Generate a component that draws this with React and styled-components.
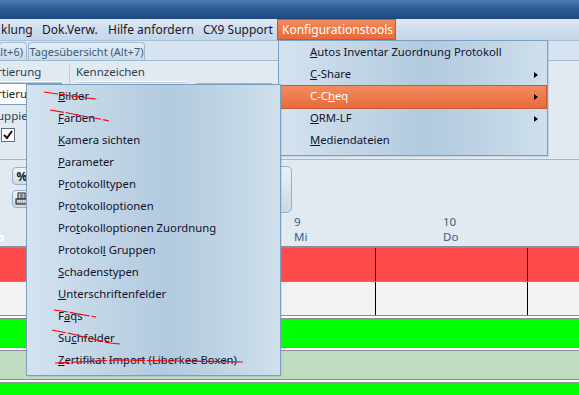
import React from "react";
import styled, { createGlobalStyle } from "styled-components";

const GlobalStyle = createGlobalStyle`
  html, body {
    margin: 0;
    padding: 0;
    background: #e1e9f1;
  }
  body {
    font-family: "Noto Sans", "Open Sans", sans-serif;
    font-size: 12px;
  }
`;

const Page = styled.div`
  position: relative;
  width: 579px;
  height: 395px;
  overflow: hidden;
  background: #e1e9f1;
`;

const TitleBar = styled.div`
  height: 19px;
  background: linear-gradient(to bottom, #4a7cb2 0%, #2c5c93 45%, #1c4981 100%);
`;

const MenuBar = styled.div`
  height: 21px;
  display: flex;
  align-items: stretch;
  background: linear-gradient(to bottom, #dde8f3 0%, #cddcec 60%, #c4d6e8 100%);
  border-bottom: 1px solid #a9c2da;
`;

const MenuItem = styled.div`
  box-sizing: border-box;
  width: ${(p) => p.$w}px;
  flex-shrink: 0;
  display: flex;
  align-items: center;
  padding-left: ${(p) => p.$pad}px;
  padding-bottom: 1px;
  color: ${(p) => (p.$active ? "#fff" : "#1b1530")};
  background: ${(p) =>
    p.$active ? "linear-gradient(to bottom, #f38a5c, #e9683a)" : "transparent"};
  border: 1px solid ${(p) => (p.$active ? "#c9582e" : "transparent")};
  font-size: 12px;
  white-space: nowrap;
  overflow: hidden;
`;

const TabStrip = styled.div`
  height: 19px;
  display: flex;
  align-items: flex-end;
  gap: 1px;
  background: #d7e3ee;
  border-bottom: 1px solid #9fbbd4;
`;

const Tab = styled.div`
  box-sizing: border-box;
  width: ${(p) => p.$w}px;
  flex-shrink: 0;
  height: 18px;
  display: flex;
  align-items: center;
  justify-content: ${(p) => (p.$cut ? "flex-end" : "center")};
  padding-right: ${(p) => (p.$cut ? "3px" : "0")};
  border: 1px solid #9fbbd4;
  border-bottom: none;
  border-radius: 4px 4px 0 0;
  background: linear-gradient(to bottom, #e4eef6, #c9dbea);
  color: #3e5a78;
  font-size: 11px;
  white-space: nowrap;
  overflow: hidden;
`;

const FilterPanel = styled.div`
  height: 98px;
  background: #e1e9f1;
  border-bottom: 1px solid #9cb6ce;
  display: grid;
  grid-template-columns: 62px 14px 110px 1fr;
  grid-template-rows: 22px 22px 20px 20px;
  align-items: center;
`;

const ColHead = styled.div`
  height: 18px;
  align-self: start;
  margin-top: 2px;
  border-bottom: 1px solid #ffffff;
  box-shadow: 0 1px 0 #b9cbdc;
  color: #2c3e55;
  font-size: 11.5px;
  line-height: 18px;
  white-space: nowrap;
  overflow: hidden;
  text-indent: ${(p) => p.$indent || 0}px;
`;

const ColSep = styled.div`
  justify-self: center;
  align-self: stretch;
  width: 1px;
  background: #b9cbdc;
  margin: 4px 0 -2px;
`;

const TextInput = styled.div`
  height: 20px;
  margin-left: -1px;
  border: 1px solid #7f9db9;
  background: #fff;
  color: #222;
  line-height: 20px;
  text-indent: -3px;
  white-space: nowrap;
  overflow: hidden;
  font-size: 11.5px;
`;

const PanelButton = styled.div`
  grid-column: 4;
  grid-row: 2 / 4;
  width: 80px;
  height: 36px;
  margin-left: 7px;
  align-self: start;
  border: 1px solid #9ab4cc;
  border-radius: 5px;
  background: linear-gradient(to bottom, #eef4f9, #d3e1ed);
`;

const Label = styled.div`
  grid-column: 1 / 3;
  color: #2c3e55;
  white-space: nowrap;
  margin-left: -3px;
  font-size: 11.5px;
`;

const Check = styled.div`
  width: 12px;
  height: 12px;
  margin-left: 1px;
  border: 1px solid #5d6e80;
  background: #fff;
  display: flex;
  align-items: center;
  justify-content: center;
`;

const Toolbar = styled.div`
  height: 55px;
  display: flex;
  align-items: flex-start;
  padding-left: 12px;
  background: #e1e9f1;
`;

const ToolColumn = styled.div`
  display: flex;
  flex-direction: column;
  gap: 5px;
  margin-top: 7px;
`;

const ToolButton = styled.div`
  width: 14px;
  height: 16px;
  padding-left: 2px;
  border: 1px solid #93b1cc;
  border-radius: 4px;
  background: linear-gradient(to bottom, #f1f6fa, #cddbe8);
  display: flex;
  align-items: center;
  justify-content: center;
  font-size: 12px;
  font-weight: bold;
  color: #111;
`;

const BigButton = styled.div`
  margin-left: 216px;
  margin-top: 6px;
  width: 44px;
  height: 45px;
  border: 1px solid #93b1cc;
  border-radius: 5px;
  background: linear-gradient(to bottom, #e9f1f7, #c8d9e7);
`;

const DateHeader = styled.div`
  height: 31px;
  display: flex;
  background: #e1e9f1;
  border-bottom: 2px solid #8a8f95;
`;

const DayCell = styled.div`
  box-sizing: border-box;
  width: ${(p) => p.$w}px;
  flex-shrink: 0;
  padding-left: ${(p) => p.$pad}px;
  margin-top: -1px;
  color: #355d8a;
  font-size: 11.5px;
  line-height: 15px;
`;

const LeftMark = styled.div`
  box-sizing: border-box;
  width: 8px;
  flex-shrink: 0;
  color: #ffffff;
  font-weight: bold;
  font-size: 10px;
  padding-top: 15px;
  text-indent: -2px;
`;

const Grid = styled.div`
  display: flex;
  flex-direction: column;
`;

const Row = styled.div`
  height: ${(p) => p.$h}px;
  background: ${(p) => p.$bg};
  border-bottom: 1px solid #8a8f95;
  position: relative;
  flex-shrink: 0;
`;

const RowGap = styled.div`
  height: 2px;
  background: #fff;
  border-bottom: 1px solid #8a8f95;
  flex-shrink: 0;
`;

const VLine = styled.div`
  position: absolute;
  top: 0;
  bottom: 0;
  left: ${(p) => p.$x}px;
  width: 1px;
  background: #000;
`;

const Menu = styled.div`
  position: absolute;
  left: ${(p) => p.$left}px;
  top: ${(p) => p.$top}px;
  width: ${(p) => p.$width}px;
  padding: 1px 0 3px;
  border: 1px solid #7a9fc0;
  background: linear-gradient(
    to right,
    #d5e3ef 0%,
    #c3d7e7 25%,
    #b2cadf 55%,
    #c0d5e5 80%,
    #cfe0ec 100%
  );
  box-shadow: 1px 1px 0 rgba(120, 150, 180, 0.25);
`;

const Item = styled.div`
  position: relative;
  box-sizing: border-box;
  height: 22px;
  margin: 0 1px;
  padding-left: ${(p) => p.$indent}px;
  padding-bottom: 3px;
  display: flex;
  align-items: center;
  font-size: 11.3px;
  color: ${(p) => (p.$active ? "#ffffff" : "#14122a")};
  background: ${(p) =>
    p.$active ? "linear-gradient(to bottom, #f38b5e, #e96a3c)" : "transparent"};
  outline: ${(p) => (p.$active ? "1px solid #c65a32" : "none")};
  white-space: pre;
`;

const Arrow = styled.span`
  position: absolute;
  right: 8px;
  top: 8px;
  width: 0;
  height: 0;
  border-top: 3px solid transparent;
  border-bottom: 3px solid transparent;
  border-left: 4px solid #000;
`;

const Strike = styled.svg`
  position: absolute;
  left: 0;
  top: 0;
  overflow: visible;
  pointer-events: none;
`;

const U = ({ text, at }) => (
  <span>
    {text.slice(0, at)}
    <u>{text[at]}</u>
    {text.slice(at + 1)}
  </span>
);

const topMenu = [
  { text: "Autos Inventar Zuordnung Protokoll", at: 0 },
  { text: "C-Share", at: 0, sub: true },
  { text: "C-Cheq", at: 3, sub: true, active: true },
  { text: "ORM-LF", at: 0, sub: true },
  { text: "Mediendateien", at: 0 },
];

// strike: hand drawn red line, points relative to the item box
const cheqMenu = [
  { text: "Bilder", at: 0, strike: "16,6 30,8 44,10 58,12 70,13" },
  { text: "Farben", at: 0, strike: "22,2 40,5 60,9 72,11 81,13" },
  { text: "Kamera sichten", at: 0 },
  { text: "Parameter", at: 0 },
  { text: "Protokolltypen", at: 1 },
  { text: "Protokolloptionen", at: 2 },
  { text: "Protokolloptionen Zuordnung", at: 3 },
  { text: "Protokoll Gruppen", at: 8 },
  { text: "Schadenstypen", at: 0 },
  { text: "Unterschriftenfelder", at: 0 },
  { text: "Faqs", at: 1, strike: "26,4 40,6 56,9 68,11" },
  { text: "Suchfelder", at: 2, strike: "24,2 44,6 64,11 82,15 92,16" },
  { text: "Zertifikat Import (Liberkee Boxen)", at: 0, strike: "27,13 90,10 150,11 215,12" },
];

export default function App() {
  return (
    <Page>
      <GlobalStyle />
      <TitleBar />
      <MenuBar>
        <MenuItem $w={36} $pad={0}>klung</MenuItem>
        <MenuItem $w={66} $pad={5}>Dok.Verw.</MenuItem>
        <MenuItem $w={95} $pad={5}>Hilfe anfordern</MenuItem>
        <MenuItem $w={80} $pad={5}>CX9 Support</MenuItem>
        <MenuItem $w={119} $pad={4} $active>
          Konfigurationstools
        </MenuItem>
      </MenuBar>
      <TabStrip>
        <Tab $w={28} $cut style={{ marginLeft: -1 }}>
          (Alt+6)
        </Tab>
        <Tab $w={117}>Tagesübersicht (Alt+7)</Tab>
      </TabStrip>
      <FilterPanel>
        <ColHead $indent={-3}>rtierung</ColHead>
        <ColSep />
        <ColHead>Kennzeichen</ColHead>
        <div />
        <TextInput>rtierung</TextInput>
        <div />
        <div />
        <PanelButton />
        <Label>uppierung</Label>
        <div style={{ gridColumn: 1 }}>
          <Check>
            <svg width="10" height="10" viewBox="0 0 10 10">
              <path d="M1 5 L4 8 L9 1" stroke="#111" strokeWidth="2" fill="none" />
            </svg>
          </Check>
        </div>
      </FilterPanel>
      <Toolbar>
        <ToolColumn>
          <ToolButton>%</ToolButton>
          <ToolButton>
            <svg width="14" height="14" viewBox="0 0 14 14">
              <rect x="3" y="1" width="7" height="6" fill="#fff" stroke="#111" />
              <path d="M4.5 3 H8.5 M4.5 5 H8.5" stroke="#111" />
              <rect x="1" y="7" width="12" height="5" fill="#bbb" stroke="#111" />
              <path d="M2 9 H12" stroke="#fff" strokeDasharray="1 1" />
            </svg>
          </ToolButton>
        </ToolColumn>
        <BigButton />
      </Toolbar>
      <DateHeader>
        <LeftMark>o</LeftMark>
        <DayCell $w={435} $pad={286}>
          9
          <br />
          Mi
        </DayCell>
        <DayCell $w={136} $pad={0}>
          10
          <br />
          Do
        </DayCell>
      </DateHeader>
      <Grid>
        <Row $h={33} $bg="#ff4b4b">
          <VLine $x={375} />
          <VLine $x={527} />
        </Row>
        <Row $h={33} $bg="#f2f2f2">
          <VLine $x={375} />
          <VLine $x={527} />
        </Row>
        <RowGap />
        <Row $h={28} $bg="#00ff00" />
        <RowGap />
        <Row $h={28} $bg="#c0dcc0" />
        <RowGap />
        <Row $h={20} $bg="#00ff00" />
      </Grid>

      <Menu $left={278} $top={40} $width={268}>
        {topMenu.map((m) => (
          <Item key={m.text} $indent={30} $active={m.active}>
            <U text={m.text} at={m.at} />
            {m.sub && <Arrow />}
          </Item>
        ))}
      </Menu>

      <Menu $left={26} $top={84} $width={253}>
        {cheqMenu.map((m) => (
          <Item key={m.text} $indent={30}>
            <U text={m.text} at={m.at} />
            {m.strike && (
              <Strike width="1" height="1">
                <polyline
                  points={m.strike}
                  fill="none"
                  stroke="#ff0000"
                  strokeWidth="1.2"
                  strokeDasharray="14 2 20 2"
                />
              </Strike>
            )}
          </Item>
        ))}
      </Menu>
    </Page>
  );
}
